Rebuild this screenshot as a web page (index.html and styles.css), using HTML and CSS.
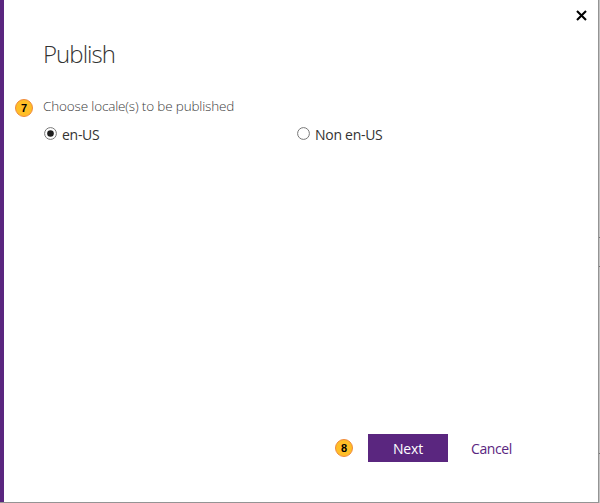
FILE: index.html
```
<!DOCTYPE html>
<html lang="en">
<head>
<meta charset="utf-8">
<title>Publish</title>
<link rel="stylesheet" href="styles.css">
</head>
<body>
<main class="dialog">
  <header class="topbar">
    <button class="close" aria-label="Close"><svg width="11" height="11" viewBox="0 0 11 11"><path d="M1 1L10 10M10 1L1 10" fill="none" stroke="#000" stroke-width="2.1"/></svg></button>
  </header>
  <h1 class="title">Publish</h1>
  <section class="question">
    <span class="step">7</span>
    <p class="prompt">Choose locale(s) to be published</p>
  </section>
  <div class="options">
    <label class="option"><svg class="radio" width="13" height="13" viewBox="0 0 13 13"><circle cx="6.5" cy="6.5" r="5.9" fill="#fff" stroke="#777"/><circle cx="6.5" cy="6.5" r="3.3" fill="#1e1e1e"/></svg><span class="locale">en-US</span></label>
    <label class="option"><svg class="radio" width="13" height="13" viewBox="0 0 13 13"><circle cx="6.5" cy="6.5" r="5.9" fill="#fff" stroke="#777"/></svg><span class="locale">Non en-US</span></label>
  </div>
  <footer class="actions">
    <span class="step">8</span>
    <button class="next">Next</button>
    <button class="cancel">Cancel</button>
  </footer>
</main>
<aside class="edge"><i class="tick"></i><i class="tick"></i><i class="tick"></i></aside>
</body>
</html>
```
FILE: styles.css
```
* { box-sizing: border-box; }
body {
  margin: 0;
  display: flex;
  width: 600px;
  height: 503px;
  overflow: hidden;
  background: #fff;
  color: #333;
  font-family: "Open Sans", "Noto Sans", sans-serif;
}
button { border: 0; padding: 0; background: none; font: inherit; }
.dialog {
  width: 599px;
  height: 503px;
  display: flex;
  flex-direction: column;
  border: solid #949494;
  border-width: 0 1px 1px 0;
  box-shadow: inset 4px 0 #5a267f;
}
.topbar { height: 32px; padding: 10px 11px 0 0; display: flex; justify-content: flex-end; }
.close { width: 11px; height: 11px; }
.close svg { display: block; }
.title {
  margin: 5px 0 0 43px;
  height: 34px;
  line-height: 34px;
  font-size: 24px;
  font-weight: 300;
  letter-spacing: -.95px;
}
.question { display: flex; height: 20px; margin: 27px 0 0 15px; align-items: center; }
.step {
  flex: none;
  width: 18px;
  height: 18px;
  border: 1px solid #f08a3c;
  border-radius: 50%;
  background: #ffbe27;
  color: #000;
  font: bold 11px/16px "Liberation Sans", sans-serif;
  text-align: center;
}
.prompt {
  margin: -4px 0 0 10px;
  color: #3c3c3c;
  font-size: 13.5px;
  font-weight: 300;
  line-height: 20px;
  letter-spacing: -.16px;
  white-space: nowrap;
}
.options { display: grid; grid-template-columns: 253px 253px; margin: 7px 0 0 44px; height: 20px; }
.option { display: flex; height: 20px; }
.radio { margin-top: 2px; }
.locale { margin-left: 5px; font-size: 14px; line-height: 20px; letter-spacing: -.28px; }
.actions { display: flex; margin: auto 0 40px 335px; height: 28px; align-items: center; font-size: 14px; }
.next { width: 80px; height: 28px; margin-left: 15px; background: #5a267f; color: #fff; line-height: 28px; padding-top: 1px; letter-spacing: -.2px; }
.cancel { margin-left: 23px; color: #5a267f; font-size: 14px; letter-spacing: -.38px; }
.edge { width: 1px; height: 503px; background: #c3c3c3; }
.tick { display: block; height: 1px; background: #777; margin-top: 237px; }
.tick + .tick { margin-top: 28px; }
.tick:nth-child(3) { margin-top: 186px; }
```
